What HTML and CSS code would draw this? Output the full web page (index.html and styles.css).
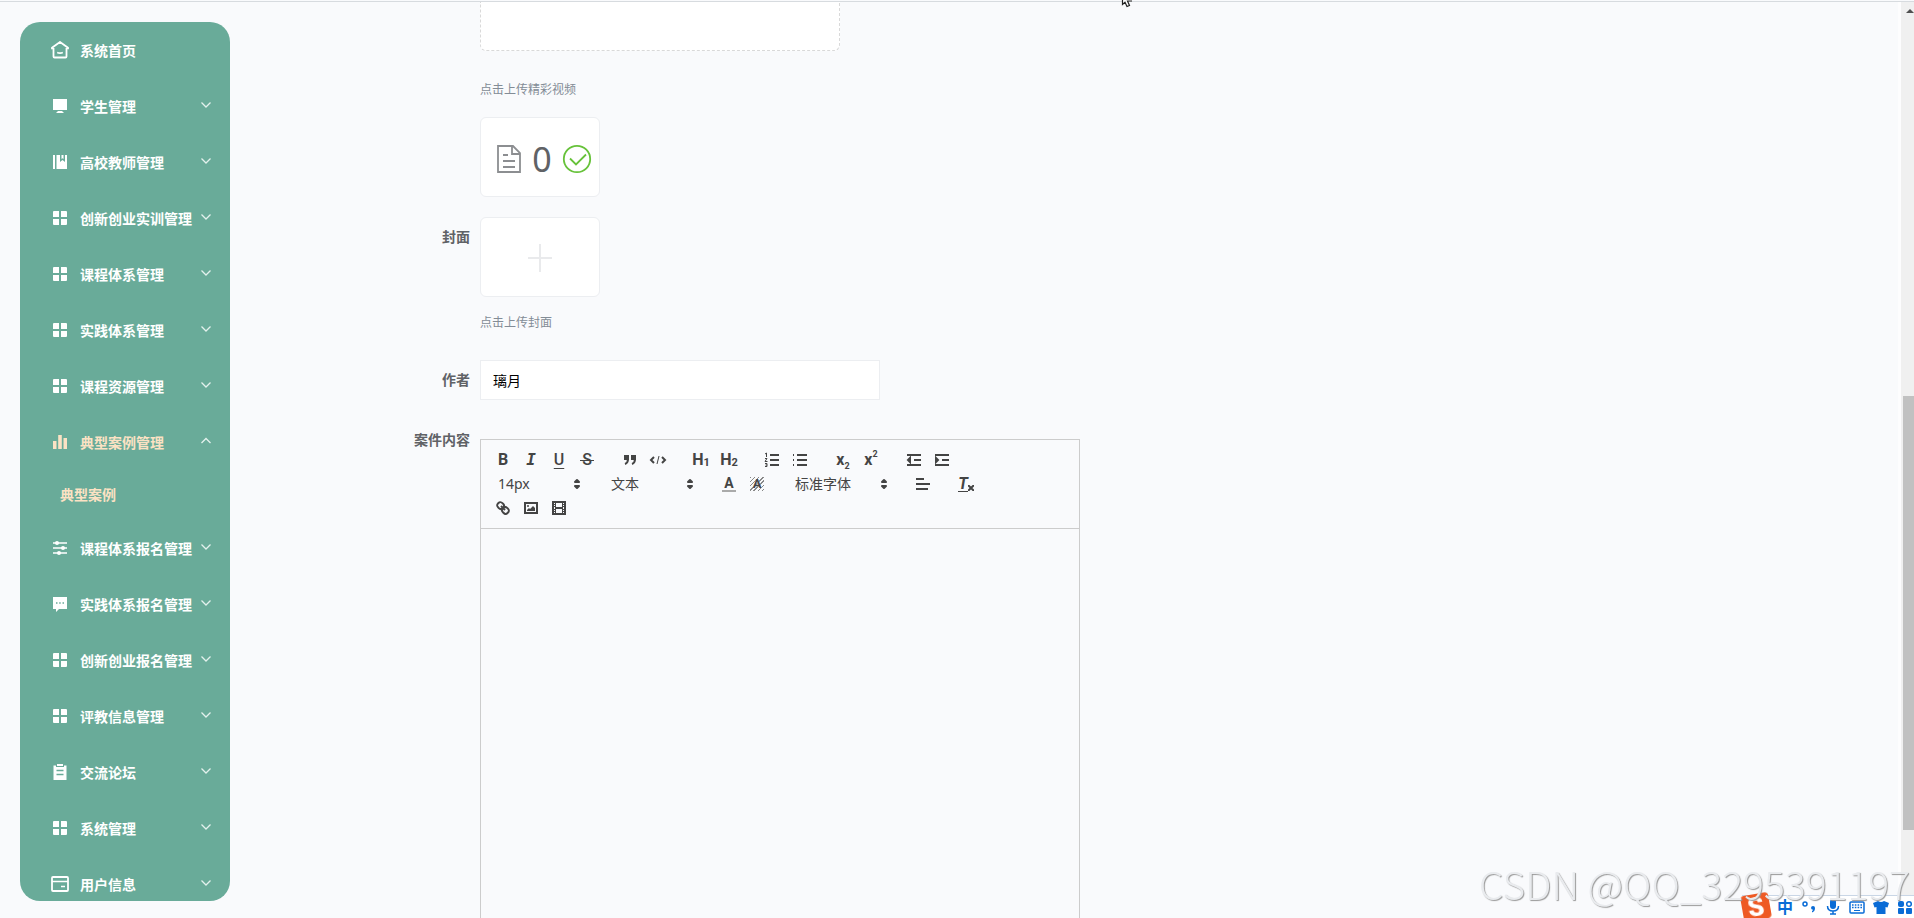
FILE: index.html
```
<!DOCTYPE html>
<html lang="zh-CN">
<head>
    <meta charset="UTF-8">
    <meta name="viewport" content="width=device-width, initial-scale=1.0">
    <title>典型案例</title>
    <link rel="stylesheet" href="styles.css">
</head>
<body>
    <svg class="symbols" aria-hidden="true">
        <symbol id="i-down" viewBox="0 0 12 12"><path d="M1.500 3.500L6 8l4.500-4.500" fill="none" stroke="currentColor" stroke-width="1.300"/></symbol>
        <symbol id="i-up" viewBox="0 0 12 12"><path d="M1.500 8L6 3.500 10.500 8" fill="none" stroke="currentColor" stroke-width="1.300"/></symbol>
        <symbol id="i-menu" viewBox="0 0 18 18"><path d="M3 2h5v6H2V3a1 1 0 0 1 1-1zM10 2h5a1 1 0 0 1 1 1v5h-6zM2 10h6v6H3a1 1 0 0 1-1-1zM10 10h6v5a1 1 0 0 1-1 1h-5z" fill="currentColor"/></symbol>
        <symbol id="i-sort" viewBox="0 0 18 18"><path d="M7 11l2 2 2-2zM7 7l2-2 2 2z" fill="currentColor" stroke="currentColor" stroke-width="2" stroke-linejoin="round"/></symbol>
    </svg>

    <div class="page">
        <nav class="sidebar">
            <a class="menu-item" href="#">
                <svg class="icon" viewBox="0 0 18 18"><path d="M1 8.200V6.800L9 1l8 5.800v1.400M2.500 7v8.500a1 1 0 0 0 1 1h11a1 1 0 0 0 1-1V7M6.200 11.500q2.800 1.200 5.600 0" fill="none" stroke="currentColor" stroke-width="1.800"/></svg>
                <span>系统首页</span>
            </a>
            <a class="menu-item" href="#">
                <svg class="icon" viewBox="0 0 18 18"><path d="M2 2h14v11H2zM7 14h4l2 2H5z" fill="currentColor"/></svg>
                <span>学生管理</span><svg class="arrow"><use href="#i-down"/></svg>
            </a>
            <a class="menu-item" href="#">
                <svg class="icon" viewBox="0 0 18 18"><path d="M2 2h2v14H2zM5.500 2H9v7l2.500-2L14 9V2h2v14H5.500zM10.500 2h2v4l-1-.8-1 .8z" fill="currentColor"/></svg>
                <span>高校教师管理</span><svg class="arrow"><use href="#i-down"/></svg>
            </a>
            <a class="menu-item" href="#">
                <svg class="icon"><use href="#i-menu"/></svg>
                <span>创新创业实训管理</span><svg class="arrow"><use href="#i-down"/></svg>
            </a>
            <a class="menu-item" href="#">
                <svg class="icon"><use href="#i-menu"/></svg>
                <span>课程体系管理</span><svg class="arrow"><use href="#i-down"/></svg>
            </a>
            <a class="menu-item" href="#">
                <svg class="icon"><use href="#i-menu"/></svg>
                <span>实践体系管理</span><svg class="arrow"><use href="#i-down"/></svg>
            </a>
            <a class="menu-item" href="#">
                <svg class="icon"><use href="#i-menu"/></svg>
                <span>课程资源管理</span><svg class="arrow"><use href="#i-down"/></svg>
            </a>
            <a class="menu-item active" href="#">
                <svg class="icon" viewBox="0 0 18 18"><path d="M2 8h3.500v8H2zM7.200 2h3.600v14H7.200zM12.500 5H16v11h-3.500z" fill="currentColor"/></svg>
                <span>典型案例管理</span><svg class="arrow"><use href="#i-up"/></svg>
            </a>
            <a class="sub-item active" href="#">典型案例</a>
            <a class="menu-item" href="#">
                <svg class="icon" viewBox="0 0 18 18"><path d="M2 4h14M2 9h14M2 14h14" stroke="currentColor" stroke-width="1.500"/><g fill="currentColor"><circle cx="6" cy="4" r="2"/><circle cx="12" cy="9" r="2"/><circle cx="8" cy="14" r="2"/></g></svg>
                <span>课程体系报名管理</span><svg class="arrow"><use href="#i-down"/></svg>
            </a>
            <a class="menu-item" href="#">
                <svg class="icon" viewBox="0 0 18 18"><path d="M2 2h14v12H8l-3 3v-3H2z" fill="currentColor"/><path d="M5 8h1.500M8.200 8h1.500M11.500 8H13" stroke="#69ab99" stroke-width="1.500"/></svg>
                <span>实践体系报名管理</span><svg class="arrow"><use href="#i-down"/></svg>
            </a>
            <a class="menu-item" href="#">
                <svg class="icon"><use href="#i-menu"/></svg>
                <span>创新创业报名管理</span><svg class="arrow"><use href="#i-down"/></svg>
            </a>
            <a class="menu-item" href="#">
                <svg class="icon"><use href="#i-menu"/></svg>
                <span>评教信息管理</span><svg class="arrow"><use href="#i-down"/></svg>
            </a>
            <a class="menu-item" href="#">
                <svg class="icon" viewBox="0 0 18 18"><path d="M2.500 2.500H5V4h8V2.500h2.500V17h-13zM6 1h6v2H6z" fill="currentColor"/><path d="M5.500 7.500h7M5.500 11.500h7" stroke="#69ab99" stroke-width="1.500"/></svg>
                <span>交流论坛</span><svg class="arrow"><use href="#i-down"/></svg>
            </a>
            <a class="menu-item" href="#">
                <svg class="icon"><use href="#i-menu"/></svg>
                <span>系统管理</span><svg class="arrow"><use href="#i-down"/></svg>
            </a>
            <a class="menu-item" href="#">
                <svg class="icon" viewBox="0 0 18 18"><rect x="1" y="2" width="16" height="14" rx="1" fill="none" stroke="currentColor" stroke-width="1.800"/><path d="M1 6.500h16M10 11.500h4" stroke="currentColor" stroke-width="1.500"/></svg>
                <span>用户信息</span><svg class="arrow"><use href="#i-down"/></svg>
            </a>
        </nav>

        <form class="form">
            <div class="form-row">
                <div class="form-content">
                    <div class="dragger"></div>
                    <p class="tip video-tip">点击上传精彩视频</p>
                    <div class="upload-card file">
                        <svg class="file-icon" viewBox="0 0 28 32"><path d="M3 3h15l7 7v19H3zM17 3v8h8M8 12h5M8 18h12M8 24h12" fill="none" stroke="#8c8e91" stroke-width="1.800"/></svg>
                        <span>0</span>
                        <svg class="ok-icon" viewBox="0 0 32 32"><circle cx="16" cy="16" r="13.200" fill="none" stroke="#67c23a" stroke-width="1.800"/><path d="M9 15.500l6 6 10-10" fill="none" stroke="#67c23a" stroke-width="1.800"/></svg>
                    </div>
                </div>
            </div>

            <div class="form-row">
                <label class="form-label" for="cover">封面</label>
                <div class="form-content">
                    <button class="upload-card" id="cover" type="button" aria-label="封面">
                        <svg class="plus" viewBox="0 0 28 28"><path d="M14 0v28M2 14h24" stroke="#e9eaec" stroke-width="2"/></svg>
                    </button>
                    <p class="tip cover-tip">点击上传封面</p>
                </div>
            </div>

            <div class="form-row">
                <label class="form-label" for="author">作者</label>
                <div class="form-content">
                    <input class="text-input" id="author" type="text" value="璃月">
                </div>
            </div>

            <div class="form-row editor-row">
                <label class="form-label" for="content">案件内容</label>
                <div class="editor">
                    <div class="toolbar">
                        <span class="formats">
                            <button type="button" class="t-bold">B</button>
                            <button type="button" class="t-italic">I</button>
                            <button type="button" class="t-underline">U</button>
                            <button type="button" class="t-strike"><span>S</span></button>
                        </span>
                        <span class="formats">
                            <button type="button" aria-label="引用"><svg viewBox="0 0 18 18"><path class="fill line" d="M4 5h3v3H4zM11 5h3v3h-3z"/><path class="line" d="M7 8c0 4-3 5-3 5M14 8c0 4-3 5-3 5"/></svg></button>
                            <button type="button" aria-label="代码"><svg viewBox="0 0 18 18"><path class="line" d="M5 6L2 9l3 3M13 6l3 3-3 3"/><path class="line thin" d="M10 5L8 13"/></svg></button>
                        </span>
                        <span class="formats">
                            <button type="button" class="t-head">H<small>1</small></button>
                            <button type="button" class="t-head">H<small>2</small></button>
                        </span>
                        <span class="formats">
                            <button type="button" aria-label="有序列表"><svg viewBox="0 0 18 18"><path class="line" d="M7 4h9M7 9h9M7 14h9"/><path class="line thin" d="M2 3l1.500-1v4M2 7.500h2L2 10.500h2.500M2 12.500h2v3H2M2.500 14H4"/></svg></button>
                            <button type="button" aria-label="无序列表"><svg viewBox="0 0 18 18"><path class="line" d="M6 4h10M6 9h10M6 14h10M2 4h1M2 9h1M2 14h1"/></svg></button>
                        </span>
                        <span class="formats">
                            <button type="button" class="t-script">x<sub>2</sub></button>
                            <button type="button" class="t-script">x<sup>2</sup></button>
                        </span>
                        <span class="formats">
                            <button type="button" aria-label="减少缩进"><svg viewBox="0 0 18 18"><path class="line" d="M2 4h14M2 14h14M9 9h7"/><path class="fill line" d="M5 7v4L3 9z"/></svg></button>
                            <button type="button" aria-label="增加缩进"><svg viewBox="0 0 18 18"><path class="line" d="M2 4h14M2 14h14M9 9h7"/><path class="fill line" d="M3 7v4l2-2z"/></svg></button>
                        </span>
                        <span class="formats">
                            <span class="picker">
                                <select aria-label="字号"><option>14px</option></select>
                                <svg><use href="#i-sort"/></svg>
                            </span>
                        </span>
                        <span class="formats">
                            <span class="picker">
                                <select aria-label="标题"><option>文本</option></select>
                                <svg><use href="#i-sort"/></svg>
                            </span>
                        </span>
                        <span class="formats">
                            <button type="button" class="t-color"><span>A</span></button>
                            <button type="button" class="t-background"><span>A</span></button>
                        </span>
                        <span class="formats">
                            <span class="picker font-picker">
                                <select aria-label="字体"><option>标准字体</option></select>
                                <svg><use href="#i-sort"/></svg>
                            </span>
                        </span>
                        <span class="formats">
                            <button type="button" aria-label="对齐"><svg viewBox="0 0 18 18"><path class="line" d="M2 4h8M2 9h14M2 14h12"/></svg></button>
                        </span>
                        <span class="formats">
                            <button type="button" class="t-clean"><span>T</span><svg viewBox="0 0 6 6"><path class="line" d="M0 0l6 6M6 0L0 6"/></svg></button>
                        </span>
                        <span class="formats">
                            <button type="button" aria-label="链接"><svg viewBox="0 0 18 18"><path class="line" d="M7 7l4 4M8.900 4.577a3.476 3.476 0 0 1 .36 4.679A3.476 3.476 0 0 1 4.577 8.900C3.185 7.500 2.035 6.400 4.217 4.217S7.500 3.185 8.900 4.577zM13.423 9.100a3.476 3.476 0 0 0-4.679-.36 3.476 3.476 0 0 0 .36 4.679c1.392 1.392 2.500 2.542 4.679.36S14.815 10.500 13.423 9.100z"/></svg></button>
                            <button type="button" aria-label="图片"><svg viewBox="0 0 18 18"><path class="line" d="M3 4h12v10H3z"/><circle class="fill" cx="6" cy="7" r="1"/><path class="fill" d="M5 12v-1l2-2 1 1 3-3 2 2v3z"/></svg></button>
                            <button type="button" aria-label="视频"><svg viewBox="0 0 18 18"><path class="line" d="M3 3h12v12H3z"/><path class="fill" d="M5 3h1v12H5zM12 3h1v12h-1zM5 8h8v2H5zM3 5h3v1H3zM3 7h3v1H3zM3 10h3v1H3zM3 12h3v1H3zM12 5h3v1h-3zM12 7h3v1h-3zM12 10h3v1h-3zM12 12h3v1h-3z"/></svg></button>
                        </span>
                    </div>
                    <textarea class="editor-body" id="content"></textarea>
                </div>
            </div>
        </form>

        <div class="scrollbar">
            <div class="scroll-arrow"></div>
            <div class="scroll-track">
                <div class="scroll-thumb"></div>
            </div>
        </div>
    </div>

    <svg class="cursor" viewBox="0 0 14 8"><path d="M1.500-4V4.500L4 2.200 6 6.500l2.500-1L6.500 1H11" fill="#fff" stroke="#222" stroke-width="1.200"/></svg>

    <div class="ime">
        <span class="ime-logo">S</span>
        <span class="ime-lang">中</span>
        <svg viewBox="0 0 18 18"><circle cx="5" cy="6" r="2" fill="none" stroke="currentColor" stroke-width="1.500"/><path d="M11 10a2 2 0 1 1 4 0q0 3.500-3 4.500v-1.500q1-.5 1-1.300a2 2 0 0 1-2-1.700z" fill="currentColor"/></svg>
        <svg viewBox="0 0 18 18"><rect x="6" y="1" width="6" height="10" rx="3" fill="currentColor"/><path d="M3.500 8q0 5 5.500 5t5.500-5M9 13v3M6 16h6" fill="none" stroke="currentColor" stroke-width="1.500"/></svg>
        <svg viewBox="0 0 18 18"><rect x="2" y="4" width="14" height="11" rx="1" fill="none" stroke="currentColor" stroke-width="1.500"/><path d="M4 7h10M4 9.500h10" stroke="currentColor" stroke-width="1.400" stroke-dasharray="1.600 1.200"/><path d="M6 12.500h6" stroke="currentColor"/></svg>
        <svg viewBox="0 0 18 18"><path d="M6 3q3 2 6 0l5 2-1.500 4.500L13.500 9v7h-9V9l-2 .5L1 5z" fill="currentColor"/></svg>
        <svg viewBox="0 0 18 18"><rect x="2" y="3" width="6" height="6" rx="2" fill="currentColor"/><rect x="2" y="10" width="6" height="6" rx="1" fill="currentColor"/><rect x="10" y="10" width="6" height="6" rx="1" fill="currentColor"/><circle cx="13" cy="6" r="2.300" fill="none" stroke="currentColor" stroke-width="1.500"/></svg>
    </div>
    <div class="watermark">CSDN @QQ_3295391197</div>
</body>
</html>
```
FILE: styles.css
```
* {
    box-sizing: border-box;
}
body {
    margin: 0;
    height: 100vh;
    overflow: hidden;
    background-color: #f9fafc;
    font-family: "Noto Sans", "Noto Sans CJK SC", sans-serif;
    font-size: 14px;
    color: #606266;
}
.symbols {
    display: none;
}
.page {
    display: flex;
    height: 100vh;
    padding-top: 1px;
}
.page::before {
    content: "";
    position: absolute;
    top: 1px;
    left: 0;
    right: 0;
    height: 1px;
    background-color: #d7dbdf;
}

/* 左侧菜单 */
.sidebar {
    flex: 0 0 210px;
    margin: 21px 20px 17px;
    border-radius: 20px;
    background-color: #69ab99;
    overflow: hidden;
}
.menu-item {
    display: flex;
    align-items: center;
    gap: 11px;
    height: 56px;
    padding: 0 18px 0 31px;
    color: #fff;
    font-weight: bold;
    text-decoration: none;
    white-space: nowrap;
}
.sub-item {
    display: block;
    padding-left: 40px;
    line-height: 50px;
    font-weight: bold;
    text-decoration: none;
}
.active {
    color: #fbe2c4;
}
.icon {
    flex: none;
    width: 18px;
    height: 18px;
}
.arrow {
    flex: none;
    width: 12px;
    height: 12px;
    margin: 0 0 2px auto;
    color: #e3f1ed;
}
.menu-item span {
    margin-right: -11px;
}

/* 表单 */
.form {
    flex: 1;
    display: flex;
    flex-direction: column;
    gap: 20px;
    padding: 1px 20px 0 80px;
}
.form-row {
    display: flex;
    padding-left: 150px;
}
.form-label {
    width: 150px;
    margin-left: -150px;
    padding-right: 10px;
    line-height: 40px;
    text-align: right;
    font-weight: bold;
}
.form-content {
    flex: 1;
}
.dragger {
    max-width: 360px;
    height: 49px;
    border: 1px dashed #d9d9d9;
    border-top: none;
    border-radius: 0 0 6px 6px;
    background-color: #fff;
}
.tip {
    line-height: 24px;
    font-size: 12px;
    color: #838c96;
}
.video-tip {
    margin: 27px 0 15px;
}
.cover-tip {
    margin: 14px 0 5px;
}
.upload-card {
    display: flex;
    align-items: center;
    justify-content: center;
    width: 120px;
    height: 80px;
    padding: 2px 0 0;
    border: 1px solid #eceef1;
    border-radius: 6px;
    background-color: #fff;
}
.file {
    gap: 9px;
    padding: 4px 0 0 8px;
    font-size: 34px;
}
.file-icon {
    width: 28px;
    height: 32px;
}
.ok-icon {
    width: 32px;
    height: 32px;
}
.plus {
    width: 28px;
    height: 28px;
}
.text-input {
    display: block;
    width: 100%;
    max-width: 400px;
    height: 40px;
    padding: 0 12px;
    border: 1px solid #eceef1;
    background-color: #fff;
    font: inherit;
    color: #000;
}

/* 富文本编辑器 */
.editor-row {
    flex: 1;
}
.editor {
    flex: 1;
    display: flex;
    flex-direction: column;
    max-width: 600px;
    margin-top: 19px;
    border: 1px solid #ccc;
    border-bottom: none;
}
.toolbar {
    display: flex;
    flex-wrap: wrap;
    padding: 8px;
    border-bottom: 1px solid #ccc;
    color: #444;
}
.formats {
    display: flex;
    margin-right: 15px;
}
.toolbar button {
    display: flex;
    align-items: center;
    justify-content: center;
    width: 28px;
    height: 24px;
    padding: 0;
    border: none;
    background: none;
    font-family: Roboto, sans-serif;
    font-size: 16px;
    line-height: 18px;
    font-weight: bold;
    color: #444;
}
.toolbar svg {
    width: 18px;
    height: 18px;
}
.line {
    fill: none;
    stroke: #444;
    stroke-width: 2;
}
.thin {
    stroke-width: 1;
}
.fill {
    fill: #444;
}
.toolbar .t-italic {
    font-family: "DejaVu Sans Mono", monospace;
    font-style: italic;
}
.toolbar .t-underline {
    font-weight: 500;
    text-decoration: underline;
    text-underline-offset: 3px;
}
.toolbar .t-strike {
    font-weight: 500;
}
.t-strike span {
    width: 14px;
    background: linear-gradient(#444, #444) center / 14px 1px no-repeat;
}
.toolbar .t-head small {
    align-self: flex-end;
    font-size: 11px;
}
.toolbar .t-script sub {
    align-self: flex-end;
    font-size: 9px;
    line-height: 12px;
}
.toolbar .t-script sup {
    align-self: flex-start;
    font-size: 9px;
    line-height: 12px;
}
.t-color span {
    width: 14px;
    border-bottom: 2px solid #aaa;
    font-size: 14px;
    line-height: 14px;
}
.t-background span {
    width: 14px;
    background: repeating-linear-gradient(135deg, #888 0 1px, transparent 1px 3px);
    font-size: 13px;
    line-height: 14px;
    text-shadow: 0 0 1px #f9fafc;
}
.t-clean span {
    border-bottom: 1px solid #444;
    font-style: italic;
    line-height: 14px;
}
.toolbar .t-clean svg {
    align-self: flex-end;
    width: 6px;
    height: 6px;
    margin-bottom: 5px;
}
.picker {
    position: relative;
    width: 98px;
}
.font-picker {
    width: 108px;
}
.picker select {
    display: block;
    width: 100%;
    height: 23px;
    padding: 0 20px 0 9px;
    border: none;
    background: none;
    appearance: none;
    font: inherit;
    color: #444;
}
.picker svg {
    position: absolute;
    top: 3px;
    right: 1px;
    pointer-events: none;
}
.editor-body {
    flex: 1;
    width: 100%;
    padding: 12px 15px;
    border: none;
    outline: none;
    background: none;
    resize: none;
    font: inherit;
}

/* 滚动条 */
.scrollbar {
    flex: 0 0 14px;
    display: flex;
    flex-direction: column;
    padding-top: 8px;
    border-left: 3px solid #fdfdfe;
    background-color: #f0f0f0;
}
.scroll-arrow {
    width: 0;
    margin-left: 5px;
    border: 4px solid transparent;
    border-top: none;
    border-bottom-color: #505050;
}
.scroll-track {
    flex: 1;
    display: grid;
    grid-template-rows: 383fr 434fr 88fr;
    padding-left: 2px;
}
.scroll-thumb {
    grid-row: 2;
    background-color: #c1c1c1;
}

.cursor {
    position: fixed;
    top: 0;
    left: 1121px;
    width: 14px;
    height: 8px;
}

/* 输入法工具条 */
.ime {
    position: fixed;
    right: 0;
    bottom: 0;
    display: flex;
    align-items: center;
    gap: 6px;
    height: 23px;
    border-top: 1px solid #c9d6e6;
    background-color: #fff;
    color: #0a6cd6;
}
.ime svg {
    width: 18px;
    height: 18px;
}
.ime-logo {
    width: 28px;
    height: 26px;
    border-radius: 4px;
    background-color: #ee5a24;
    transform: rotate(-10deg);
    font-family: Roboto, sans-serif;
    font-size: 26px;
    line-height: 26px;
    font-weight: 900;
    text-align: center;
    color: #fff;
}
.ime-lang {
    width: 18px;
    font-size: 16px;
    line-height: 18px;
    font-weight: bold;
    text-align: center;
}
.watermark {
    position: fixed;
    right: 4px;
    bottom: 10px;
    font-family: "Noto Sans CJK SC", sans-serif;
    font-size: 39px;
    line-height: 50px;
    font-weight: 300;
    color: #e9ebee;
    text-shadow: 1px 1px 1px #999;
}
```
